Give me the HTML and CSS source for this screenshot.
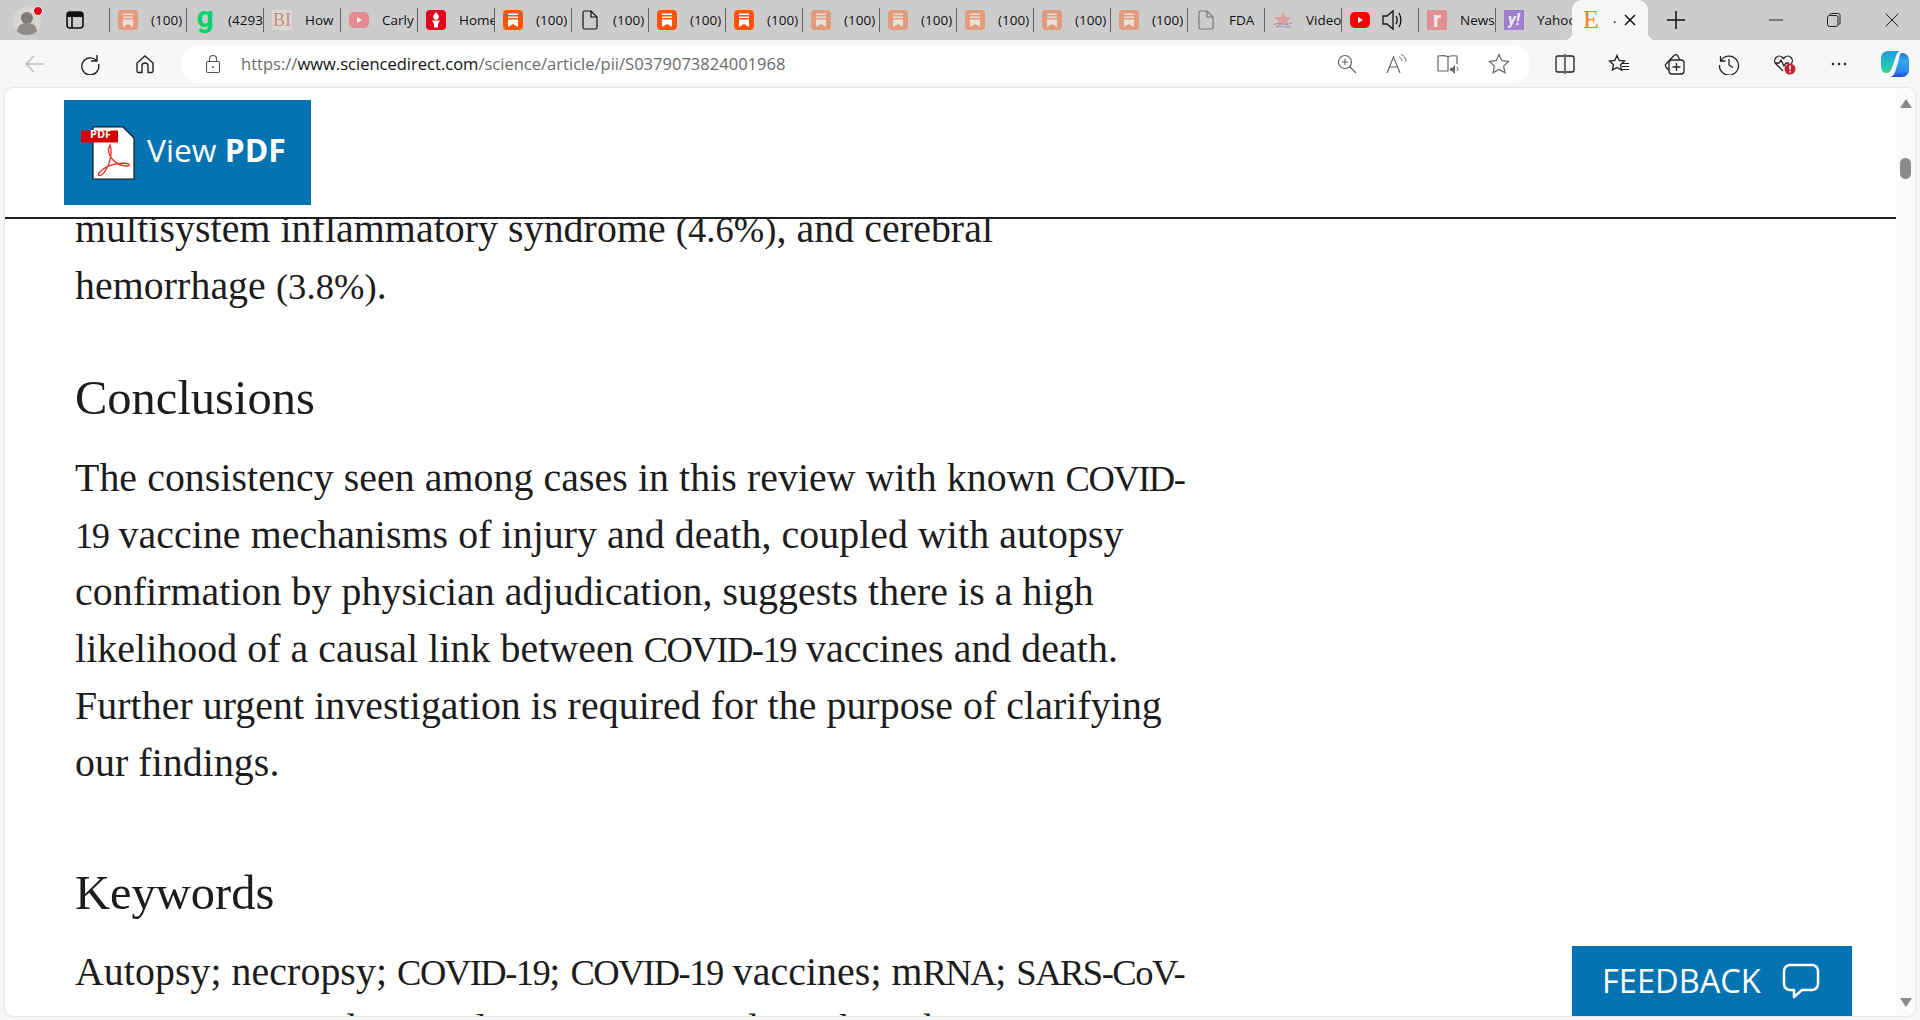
FILE: index.html
```html
<!DOCTYPE html>
<html lang="en">
<head>
<meta charset="utf-8">
<title>ScienceDirect</title>
<link rel="stylesheet" href="styles.css">
</head>
<body>
<svg class="defs" width="0" height="0" aria-hidden="true">
  <defs>
    <symbol id="bm" viewBox="0 0 20 20">
      <rect width="20" height="20" rx="4" fill="currentColor"/>
      <path d="M5 3.500h10V5H5zM5 6.500h10V8H5z" fill="var(--inner, #fff)"/>
      <path d="M5 9.500h10V17l-5-3-5 3z" fill="var(--inner, #fff)"/>
    </symbol>
    <symbol id="doc" viewBox="0 0 20 20">
      <path d="M3 2.500A1.500 1.500 0 0 1 4.500 1h6.500L17 7v10.500a1.500 1.500 0 0 1-1.500 1.500h-11A1.500 1.500 0 0 1 3 17.500zM11 1v6h6" fill="none" stroke="currentColor" stroke-width="1.200"/>
    </symbol>
    <linearGradient id="cp1" x1="0" y1="0" x2="0" y2="1"><stop offset="0" stop-color="#1f9be0"/><stop offset=".55" stop-color="#1fc0c0"/><stop offset="1" stop-color="#3ad68a"/></linearGradient>
    <linearGradient id="cp2" x1="0" y1="0" x2="0" y2="1"><stop offset="0" stop-color="#1b78c8"/><stop offset=".3" stop-color="#33a8f0"/><stop offset=".75" stop-color="#2f8cf0"/><stop offset="1" stop-color="#2447d0"/></linearGradient>
  </defs>
</svg>

<header class="tabstrip">
  <div class="profile">
    <svg width="30" height="32" viewBox="0 0 30 32"><circle cx="14" cy="17" r="14" fill="#d8d6d2"/><circle cx="14" cy="14" r="6" fill="#7f7b76"/><path d="M4 27c1-6 5-8 10-8s9 2 10 8c-3 3-6 4-10 4s-7-1-10-4z" fill="#8f8b86"/><circle cx="25" cy="7" r="4.500" fill="#e0001b" stroke="#fff" stroke-width="1"/></svg>
  </div>
  <div class="workspace">
    <svg width="20" height="20" viewBox="0 0 20 20"><rect x="2" y="2" width="16" height="16" rx="3" fill="none" stroke="#111" stroke-width="1.600"/><path d="M2 5a3 3 0 0 1 3-3h10a3 3 0 0 1 3 3v2H2z" fill="#111"/><path d="M7 7v11" stroke="#111" stroke-width="1.600"/></svg>
  </div>
  <div class="tabs">
    <div class="tab"><svg class="ico pale"><use href="#bm"/></svg><span class="label">(100)</span></div>
    <div class="tab"><span class="ico gly">g</span><span class="label">(4293</span></div>
    <div class="tab"><span class="ico bi">BI</span><span class="label">How</span></div>
    <div class="tab"><svg class="ico" viewBox="0 0 20 20"><rect y="2" width="20" height="16" rx="5" fill="#e58a8f"/><path d="M8 7l5 3-5 3z" fill="#f5f5f5"/></svg><span class="label">Carly</span></div>
    <div class="tab"><svg class="ico" viewBox="0 0 20 20"><rect width="20" height="20" rx="4" fill="#e4001b"/><path d="M10 2c1.800 2 2.800 3.500 2.800 5a2.800 2.800 0 0 1-5.600 0C7.200 5.500 8.200 4 10 2zM6 10.500h8l-2 3.500v3.500H8V14z" fill="#fff"/></svg><span class="label">Home</span></div>
    <div class="tab"><svg class="ico hot"><use href="#bm"/></svg><span class="label">(100)</span></div>
    <div class="tab"><svg class="ico dark"><use href="#doc"/></svg><span class="label">(100)</span></div>
    <div class="tab"><svg class="ico hot"><use href="#bm"/></svg><span class="label">(100)</span></div>
    <div class="tab"><svg class="ico hot"><use href="#bm"/></svg><span class="label">(100)</span></div>
    <div class="tab"><svg class="ico pale"><use href="#bm"/></svg><span class="label">(100)</span></div>
    <div class="tab"><svg class="ico pale"><use href="#bm"/></svg><span class="label">(100)</span></div>
    <div class="tab"><svg class="ico pale"><use href="#bm"/></svg><span class="label">(100)</span></div>
    <div class="tab"><svg class="ico pale"><use href="#bm"/></svg><span class="label">(100)</span></div>
    <div class="tab"><svg class="ico pale"><use href="#bm"/></svg><span class="label">(100)</span></div>
    <div class="tab"><svg class="ico grey"><use href="#doc"/></svg><span class="label">FDA</span></div>
    <div class="tab"><svg class="ico" viewBox="0 0 22 22"><path d="M11 1l2.700 7H21l-5.500 4.200 2.200 7L11 15l-6.700 4.200 2.200-7L1 8h7.300z" fill="#d9a09c"/><path d="M1 16c6-3 13 2 20-2M3 19c6-3 11 2 17-1" stroke="#8d8fc0" fill="none"/></svg><span class="label">Video</span></div>
    <div class="tab tab-audio"><svg class="ico" viewBox="0 0 20 20"><rect y="2" width="20" height="16" rx="5" fill="#f00"/><path d="M8 7l5 3-5 3z" fill="#fff"/></svg><svg class="speaker" viewBox="0 0 22 24"><path d="M2 8h4l6-5v18l-6-5H2zM15 8c1.500 2.500 1.500 5.500 0 8M18 5c2.500 4 2.500 10 0 14" fill="none" stroke="#111" stroke-width="1.300"/></svg></div>
    <div class="tab"><span class="ico rr">r</span><span class="label">News</span></div>
    <div class="tab"><span class="ico yy">y!</span><span class="label">Yahoo</span></div>
    <div class="tab-active"><span class="elsevier">E</span><span class="dot">.</span><svg class="x" width="12" height="12" viewBox="0 0 12 12"><path d="M1 1l10 10M11 1L1 11" stroke="#111" stroke-width="1.500"/></svg></div>
    <div class="newtab"><svg width="18" height="18" viewBox="0 0 18 18"><path d="M9 0v18M0 9h18" stroke="#111" stroke-width="1.500"/></svg></div>
  </div>
  <div class="winbtns">
    <svg width="14" height="14" viewBox="0 0 14 14"><path d="M0 7h14" stroke="#222" stroke-width="1"/></svg>
    <svg width="14" height="14" viewBox="0 0 14 14"><rect x=".5" y="2.500" width="10.500" height="11" rx="2" fill="none" stroke="#222"/><path d="M3 2.500V2a1.500 1.500 0 0 1 1.500-1.500h7A1.500 1.500 0 0 1 13 2v8a1.500 1.500 0 0 1-1.500 1.500" fill="none" stroke="#222"/></svg>
    <svg width="14" height="14" viewBox="0 0 14 14"><path d="M.5.5l13 13M13.500.5l-13 13" stroke="#222" stroke-width="1"/></svg>
  </div>
</header>

<nav class="toolbar">
  <div class="navbtns">
    <svg width="22" height="22" viewBox="0 0 22 22"><path d="M20 11H2M10 3l-8 8 8 8" fill="none" stroke="#bdbdbd" stroke-width="1.400"/></svg>
    <svg width="22" height="22" viewBox="0 0 22 22"><path d="M18 2v6h-6M17.500 7.500A8.500 8.500 0 1 0 19.500 11" fill="none" stroke="#222" stroke-width="1.400"/></svg>
    <svg width="22" height="22" viewBox="0 0 22 22"><path d="M3 10l8-7 8 7v8a1.500 1.500 0 0 1-1.500 1.500H14V13a3 3 0 0 0-6 0v6.500H4.500A1.500 1.500 0 0 1 3 18z" fill="none" stroke="#222" stroke-width="1.400"/></svg>
  </div>
  <div class="omnibox">
    <svg class="lock" width="16" height="20" viewBox="0 0 16 20"><rect x="1.500" y="7.500" width="13" height="11" rx="1.500" fill="none" stroke="#555" stroke-width="1.100"/><path d="M4.500 7.500V5a3.500 3.500 0 0 1 7 0v2.500" fill="none" stroke="#555" stroke-width="1.100"/><circle cx="8" cy="13" r="1" fill="#555"/></svg>
    <div class="url">https://<b>www.sciencedirect.com</b>/science/article/pii/S0379073824001968</div>
    <div class="omni-icons">
      <svg width="20" height="20" viewBox="0 0 20 20"><circle cx="8" cy="8" r="6.500" fill="none" stroke="#666" stroke-width="1.200"/><path d="M12.500 12.500L19 19M5 8h6M8 5v6" stroke="#666" stroke-width="1.200"/></svg>
      <svg width="22" height="20" viewBox="0 0 22 20"><path d="M1 19L7.500 3 14 19M3.500 13h8" fill="none" stroke="#666" stroke-width="1.200"/><path d="M13 3c2 .5 3 2 3 4M15 .5c3 1 5 3.500 5 7" fill="none" stroke="#666"/></svg>
      <svg width="22" height="20" viewBox="0 0 22 20"><path d="M11 3c-2-1.500-6-1.500-10-1v15h10zM11 3c2-1.500 5-1.500 9-1v8" fill="none" stroke="#666" stroke-width="1.200"/><path d="M13 14h2l3-3v9l-3-3h-2z" fill="#666"/><path d="M20 13c1 1.500 1 3 0 4" stroke="#666" fill="none"/></svg>
      <svg width="22" height="22" viewBox="0 0 22 22"><path d="M11 1.500l2.900 6.200 6.700.8-5 4.600 1.400 6.700-6-3.400-6 3.400 1.400-6.700-5-4.600 6.700-.8z" fill="none" stroke="#666" stroke-width="1.200"/></svg>
    </div>
  </div>
  <div class="tools">
    <svg width="20" height="20" viewBox="0 0 20 20"><path d="M9 2H3a2 2 0 0 0-2 2v12a2 2 0 0 0 2 2h6M11 2h6a2 2 0 0 1 2 2v12a2 2 0 0 1-2 2h-6M10 0v20" fill="none" stroke="#222" stroke-width="1.300"/></svg>
    <svg width="22" height="20" viewBox="0 0 22 20"><path d="M9 1.500l2.200 5 5.300.6-4 3.700 1.100 5.300L9 13.400 4.400 16l1.100-5.300-4-3.700 5.300-.6z" fill="none" stroke="#222" stroke-width="1.300"/><path d="M14 9.500h7M14 12.500h7M13 15.500h8" stroke="#222" stroke-width="1.200"/></svg>
    <svg width="22" height="22" viewBox="0 0 22 22"><rect x="6" y="7" width="15" height="14" rx="3" fill="none" stroke="#222" stroke-width="1.300"/><path d="M6 17.500L3 14a2.500 2.500 0 0 1 .5-3.500L11 2.500a2.500 2.500 0 0 1 3.500 0L17 7M13.500 10v8M9.500 14h8" fill="none" stroke="#222" stroke-width="1.300"/></svg>
    <svg width="22" height="22" viewBox="0 0 22 22"><path d="M2.500 3v5h5M3 7.500A9.500 9.500 0 1 1 1.500 12M11 6v6l4 2.500" fill="none" stroke="#222" stroke-width="1.300"/></svg>
    <svg width="24" height="22" viewBox="0 0 24 22"><path d="M10 18L3 11a4.500 4.500 0 0 1 6.500-6.500l1 1 1-1A4.500 4.500 0 0 1 18 11M2 10h4l2-3 3 6 2-3h3" fill="none" stroke="#222" stroke-width="1.300"/><circle cx="17" cy="16" r="5.500" fill="#c4262e"/><path d="M17 12.500v4M17 18v1.500" stroke="#fff" stroke-width="1.500"/></svg>
    <svg width="18" height="18" viewBox="0 0 18 18"><circle cx="3" cy="9" r="1.300" fill="#222"/><circle cx="9" cy="9" r="1.300" fill="#222"/><circle cx="15" cy="9" r="1.300" fill="#222"/></svg>
    <svg width="28" height="28" viewBox="0 0 28 28"><path d="M21 3c4 0 7 3 7 7v10c0 4-3 7-7 7H8c3 0 5-2 6-5l4-13c.6-3 1-6 3-6z" fill="url(#cp2)"/><path d="M7 1h13c-3 0-4 2-5 5l-4 12c-1 3-3 5-6 5-3 0-5-3-5-7V8c0-4 3-7 7-7z" fill="url(#cp1)"/></svg>
  </div>
</nav>

<div class="viewport">
  <main class="page">
    <div class="sticky">
      <a class="pdfbtn">
        <svg class="pdfico" width="54" height="54" viewBox="0 0 54 54">
          <path d="M12 1h30l11 11v41H12z" fill="#fff" stroke="#111" stroke-width="1.200"/>
          <rect x="0" y="4.500" width="37" height="12" fill="#d40000"/>
          <path d="M29 19c-3 5-1 11 3 15 4 4 9 6 14 6 3 0 3-2 0-2.500-7-1-17 1-23 5-4 3-7 6-5 7 3 1 7-5 10-12 2-6 3-13 1-18.500z" fill="none" stroke="#ef2a1f" stroke-width="1.300"/>
        </svg>
        <span class="pdftag">PDF</span>
        <span class="pdftext">View <b>PDF</b></span>
      </a>
    </div>
    <article class="article">
      <p class="body">multisystem inflammatory syndrome <span class="num">(4.6%)</span>, and cerebral<br>hemorrhage <span class="num">(3.8%)</span>.</p>
      <h2>Conclusions</h2>
      <p class="body">The consistency seen among cases in this review with known <span class="cap">COVID-19</span> vaccine mechanisms of injury and death, coupled with autopsy confirmation by physician adjudication, suggests there is a high likelihood of a causal link between <span class="cap">COVID-19</span> vaccines and death. Further urgent investigation is required for the purpose of clarifying our findings.</p>
      <h2 class="h-keywords">Keywords</h2>
      <p class="body">Autopsy; necropsy; <span class="cap">COVID-19</span>; <span class="cap">COVID-19</span> vaccines; m<span class="cap">RNA</span>; <span class="cap">SARS-CoV-2</span>; vaccination; adenoviral vector; myocarditis; thrombosis</p>
    </article>
    <a class="feedback"><span>FEEDBACK</span>
      <svg width="38" height="36" viewBox="0 0 38 36"><path d="M8 2h22a6 6 0 0 1 6 6v13a6 6 0 0 1-6 6H20l-8 7v-7H8a6 6 0 0 1-6-6V8a6 6 0 0 1 6-6z" fill="none" stroke="#fff" stroke-width="2.500" stroke-linejoin="round"/></svg>
    </a>
    <div class="scrollbar">
      <span class="arrow up"></span>
      <span class="thumb"></span>
      <span class="arrow down"></span>
    </div>
  </main>
</div>
</body>
</html>
```
FILE: styles.css
```css
* { box-sizing: border-box; }
html, body { margin: 0; height: 100%; }
body {
  width: 1920px;
  height: 1020px;
  overflow: hidden;
  background: #f7f7f7;
  font-family: "Open Sans", "Noto Sans", sans-serif;
  display: flex;
  flex-direction: column;
}
.defs { position: absolute; }

/* tab strip */
.tabstrip {
  height: 40px;
  background: #cccccc;
  display: flex;
  align-items: stretch;
  flex: none;
}
.profile { width: 56px; padding: 4px 0 0 13px; }
.workspace { width: 53px; padding-top: 10px; padding-left: 9px; }
.tabs { display: flex; flex: 1; align-items: stretch; }
.tab {
  width: 77px;
  flex: none;
  display: flex;
  align-items: center;
  overflow: hidden;
  white-space: nowrap;
  position: relative;
  padding-left: 9px;
  font-size: 13.5px;
  color: #111;
}
.tab::before {
  content: "";
  position: absolute;
  left: 0;
  top: 8px;
  bottom: 8px;
  width: 1px;
  background: #666;
}
.tab .ico {
  width: 20px;
  height: 20px;
  flex: none;
  margin-right: 13px;
}
.pale { color: #e39b7b; --inner: #e8dfda; }
.hot { color: #ff5500; }
.dark { color: #111; }
.grey { color: #777; }
.gly { font: 700 30px/14px Roboto, sans-serif; color: #00d26a; text-align: center; }
.bi { font: 18px/20px "Liberation Serif", serif; color: #c98b80; background: #dcd8d4; text-align: center; }
.rr { font: 700 22px/20px Roboto, sans-serif; color: #f4e9e9; background: #df9090; text-align: center; }
.yy { font: italic 700 16px/20px Roboto, sans-serif; color: #f0ecf7; background: #a17fd0; text-align: center; }
.label {
  overflow: hidden;
  flex: 1;
  padding-right: 2px;
}
.speaker { width: 22px; height: 24px; flex: none; margin-left: -2px; }
.tab-active {
  width: 76px;
  flex: none;
  background: #f7f7f7;
  border-radius: 10px 10px 0 0;
  display: flex;
  align-items: center;
  padding-left: 11px;
  position: relative;
}
.tab-active::before,
.tab-active::after {
  content: "";
  position: absolute;
  bottom: 0;
  width: 8px;
  height: 8px;
}
.tab-active::before { left: -8px; background: radial-gradient(circle at 0 0, transparent 8px, #f7f7f7 8.5px); }
.tab-active::after { right: -8px; background: radial-gradient(circle at 100% 0, transparent 8px, #f7f7f7 8.5px); }
.elsevier { font: 26px/1 "Liberation Serif", serif; color: #f5821f; width: 16px; }
.dot { font-size: 13px; width: 3px; margin: -4px 8px 0 14px; }
.newtab { width: 56px; display: flex; align-items: center; justify-content: center; }
.winbtns {
  display: flex;
  width: 214px;
  margin-left: auto;
  justify-content: space-between;
  align-items: center;
  padding: 0 21px 0 63px;
}

/* toolbar */
.toolbar {
  height: 48px;
  flex: none;
  display: flex;
  align-items: center;
  background: #f7f7f7;
  padding-bottom: 1px;
}
.navbtns {
  width: 181px;
  display: flex;
  gap: 33px;
  padding-left: 24px;
  flex: none;
}
.omnibox {
  width: 1349px;
  height: 38px;
  flex: none;
  background: #fff;
  border-radius: 19px;
  display: flex;
  align-items: center;
  padding: 0 20px 0 24px;
}
.lock { flex: none; }
.url {
  margin-left: 20px;
  font-size: 16.55px;
  color: #6b6b6b;
  flex: 1;
  white-space: nowrap;
}
.url b { font-weight: 400; color: #111; }
.omni-icons { display: flex; gap: 29px; align-items: center; }
.tools {
  flex: 1;
  display: flex;
  align-items: center;
  justify-content: space-between;
  padding: 0 11px 0 25px;
}

/* page */
.viewport { flex: 1; padding: 0 5px 4px 5px; min-height: 0; display: flex; }
.page {
  flex: 1;
  background: #fff;
  border-radius: 8px;
  position: relative;
  overflow: hidden;
  box-shadow: 0 0 2px rgba(0,0,0,.25);
  color: #1c1c1c;
}
.sticky {
  height: 131px;
  padding: 12px 0 0 59px;
  border-bottom: 2px solid #1f1f1f;
  background: #fff;
  margin-right: 19px;
  position: relative;
  z-index: 2;
}
.pdfbtn {
  width: 247px;
  height: 105px;
  background: #0572b1;
  display: flex;
  align-items: center;
  padding-left: 17px;
  position: relative;
  color: #fff;
}
.pdfico { flex: none; }
.pdftag { position: absolute; left: 26px; top: 28px; font: 700 11px/1 "Open Sans", sans-serif; color: #fff; }
.pdftext { font: 400 31.8px/1 "Open Sans", sans-serif; margin: -6px 0 0 12px; }
.pdftext b { font-weight: 700; }
.article {
  width: 1194px;
  margin-top: -18px;
  padding-left: 70px;
  font-family: "Liberation Serif", "Times New Roman", serif;
}
.body { margin: 0; font-size: 39.8px; line-height: 57px; letter-spacing: .08px; }
.cap { font-size: 36.5px; line-height: 1; letter-spacing: -1.5px; }
.num { font-size: 36.5px; line-height: 1; }
h2 { font-weight: 400; font-size: 48.5px; line-height: 60px; margin: 53px 0 22px; }
.h-keywords { margin: 71px 0 21px; }
.feedback {
  position: absolute;
  left: 1567px;
  top: 858px;
  width: 280px;
  height: 70px;
  background: #0572b1;
  color: #fff;
  display: flex;
  align-items: center;
  gap: 21px;
  padding-left: 30px;
  font: 400 32.6px/1 "Open Sans", sans-serif;
}
.scrollbar {
  position: absolute;
  right: 0;
  top: 0;
  bottom: 0;
  width: 19px;
  background: #fbfbfb;
  display: flex;
  flex-direction: column;
  align-items: center;
  padding: 11px 0 9px;
}
.thumb { width: 11px; height: 21px; border-radius: 6px; background: #8a8a8a; margin-top: 50px; }
.arrow { width: 0; height: 0; border-left: 6px solid transparent; border-right: 6px solid transparent; }
.arrow.up { border-bottom: 9px solid #8a8a8a; }
.arrow.down { border-top: 9px solid #8a8a8a; margin-top: auto; }
```
